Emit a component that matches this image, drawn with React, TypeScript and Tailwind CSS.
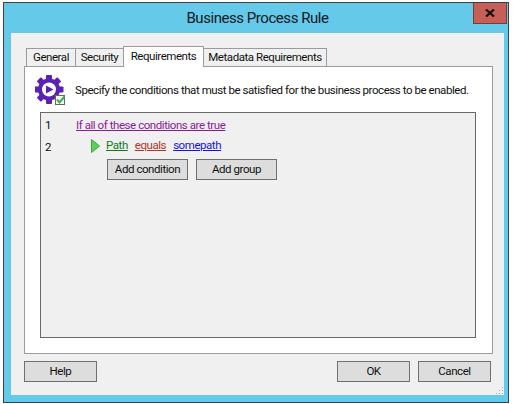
const font = "[font-family:'Roboto','Noto_Sans',sans-serif]";
const txt = "text-[11.5px] tracking-[-0.44px]";

function Btn({ label, w }: { label: string; w: string }) {
  return (
    <div className={`${w} ${txt} flex h-[21px] items-center justify-center border border-[#707070] bg-[#dddddd] text-[#101010]`}>
      {label}
    </div>
  );
}

function Tab({ label, w }: { label: string; w: string }) {
  return (
    <div className={`${w} ${txt} -mr-px flex h-[18px] items-center justify-center whitespace-nowrap border border-b-0 border-[#9a9aa2] bg-[#f0f0f0] text-[#101010]`}>
      {label}
    </div>
  );
}

function GearIcon() {
  return (
    <svg width="31" height="31" viewBox="0 0 31 31" className="shrink-0">
      <g fill="#5a22b4">
        {[0, 45, 90, 135].map((a) => (
          <rect key={a} x="11" y="0" width="6" height="29" rx="1" transform={`rotate(${a} 14 14.5)`} />
        ))}
        <circle cx="14" cy="14.5" r="11" />
      </g>
      <circle cx="14" cy="14.5" r="7" fill="#fff" />
      <path d="M11 10.5 L18.5 14.5 L11 18.5 Z" fill="#5a22b4" />
      <rect x="20.5" y="20.5" width="9" height="9" fill="#fff" stroke="#5f6b5f" />
      <path d="M22 24.5 L24.5 27.5 L29.5 21.5" fill="none" stroke="#35b04a" strokeWidth="2" />
    </svg>
  );
}

export default function App() {
  return (
    <div className={`${font} h-[404px] w-[514px] bg-white pl-[3px] pt-[2px]`}>
      <div className="relative flex h-[401px] w-[506px] flex-col border border-[#3a4248] bg-[#65c9ea] pb-[7px] pl-[7px] pr-[4px]">
        <div className="flex h-[30px] shrink-0 items-center justify-center text-[15px] tracking-[-0.45px] text-[#101820]">
          Business Process Rule
        </div>
        <div className="absolute right-[1px] top-0 flex h-[21px] w-[34px] items-center justify-center border border-t-0 border-[#7a3b36] bg-[#c75f56]">
          <svg width="10" height="8" viewBox="0 0 10 8">
            <path d="M1 0.5 L9 7.5 M9 0.5 L1 7.5" stroke="#111" strokeWidth="2.2" />
          </svg>
        </div>
        <div className="flex min-h-0 flex-1 flex-col bg-[#f0f0f0] pl-[13px] pr-[11px] pt-[12px]">
          <div className="flex h-[21px] items-end pl-[2px]">
            <Tab label="General" w="w-[50px]" />
            <Tab label="Security" w="w-[49px]" />
            <div className={`${txt} relative z-10 -mb-px -mr-px flex h-[21px] w-[81px] items-center justify-center border border-b-0 border-[#9a9aa2] bg-white pb-[1px] text-[#101010]`}>
              Requirements
            </div>
            <Tab label="Metadata Requirements" w="w-[124px]" />
          </div>
          <div className="flex h-[288px] flex-col border border-[#9a9aa2] bg-white pb-[15px] pl-[15px] pr-[16px] pt-[8px]">
            <div className="-ml-[5px] flex h-[31px] shrink-0 items-center gap-[9px]">
              <GearIcon />
              <span className={`${txt} whitespace-nowrap text-[#101010]`}>
                Specify the conditions that must be satisfied for the business process to be enabled.
              </span>
            </div>
            <div className={`${txt} mt-[6px] flex-1 border border-[#696969] bg-[#f0f0f0] pl-[4px] pt-[3px]`}>
              <div className="flex h-[19px] items-center">
                <span className="w-[31px] text-[#101010]">1</span>
                <span className="text-[#8a1a9a] underline">If all of these conditions are true</span>
              </div>
              <div className="flex h-[21px] items-center">
                <span className="mt-[4px] w-[46px] text-[#101010]">2</span>
                <svg width="9" height="14" viewBox="0 0 9 14" className="mr-[6px]">
                  <path d="M0.5 0.5 L8.5 7 L0.5 13.5 Z" fill="#5fce5a" stroke="#3aa83a" />
                </svg>
                <span className="mr-[7px] text-[#0e7a1e] underline">Path</span>
                <span className="mr-[7px] text-[#b5342a] underline">equals</span>
                <span className="text-[#1414d8] underline">somepath</span>
              </div>
              <div className="ml-[62px] mt-[3px] flex gap-[8px]">
                <Btn label="Add condition" w="w-[81px]" />
                <Btn label="Add group" w="w-[81px]" />
              </div>
            </div>
          </div>
          <div className="mt-[7px] flex items-center pr-[2px]">
            <Btn label="Help" w="w-[73px]" />
            <div className="flex-1" />
            <Btn label="OK" w="w-[73px]" />
            <div className="w-[8px]" />
            <Btn label="Cancel" w="w-[73px]" />
          </div>
          <div className="relative flex-1">
            <svg width="9" height="9" viewBox="0 0 9 9" className="absolute -right-[11px] bottom-0">
              <g fill="#a8a8a8">
                <rect x="7" y="1" width="1" height="1" />
                <rect x="4" y="4" width="1" height="1" />
                <rect x="7" y="4" width="1" height="1" />
                <rect x="1" y="7" width="1" height="1" />
                <rect x="4" y="7" width="1" height="1" />
                <rect x="7" y="7" width="1" height="1" />
              </g>
            </svg>
          </div>
        </div>
      </div>
    </div>
  );
}
